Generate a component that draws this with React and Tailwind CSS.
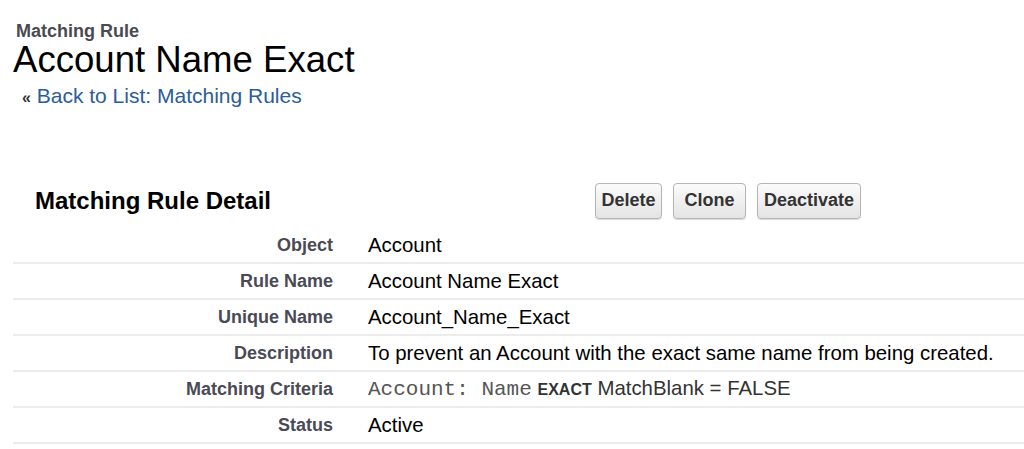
import React from "react";

const rows = [
  { label: "Object", value: "Account" },
  { label: "Rule Name", value: "Account Name Exact" },
  { label: "Unique Name", value: "Account_Name_Exact" },
  {
    label: "Description",
    value: "To prevent an Account with the exact same name from being created.",
  },
  { label: "Matching Criteria", criteria: true },
  { label: "Status", value: "Active" },
];

const buttons = [
  { label: "Delete", w: "w-[67px]" },
  { label: "Clone", w: "w-[73px]" },
  { label: "Deactivate", w: "w-[104px]" },
];

function Criteria() {
  return (
    <span className="text-[#333]">
      <span className="font-['Liberation_Mono',monospace] text-[21px] text-[#555]">
        Account: Name
      </span>{" "}
      <span className="text-[16px] font-semibold">EXACT</span> MatchBlank = FALSE
    </span>
  );
}

export default function App() {
  return (
    <div className="w-[1024px] h-[449px] overflow-hidden bg-white font-['Liberation_Sans',Arial,sans-serif] pl-[13px]">
      {/* page header */}
      <div className="pt-[21px]">
        <div className="pl-[3px] text-[18px] leading-[20px] font-bold text-[#4a4a50]">
          Matching Rule
        </div>
        <h1 className="text-[36.6px] leading-[37px] text-black">Account Name Exact</h1>
        <div className="mt-[7px] pl-[9px] text-[21px] leading-[22px]">
          <span className="text-[#333] text-[16px] font-bold">«</span>{" "}
          <a href="#" className="text-[#2b5d99]">
            Back to List: Matching Rules
          </a>
        </div>
      </div>

      {/* detail block */}
      <div className="mt-[69px]">
        <div className="flex items-center h-[45px]">
          <h2 className="w-[582px] pl-[22px] text-[24px] font-bold text-black">
            Matching Rule Detail
          </h2>
          <div className="flex gap-[11px]">
            {buttons.map((b) => (
              <button
                key={b.label}
                className={`${b.w} h-[36px] rounded-[4px] border border-[#b5b5b5] bg-gradient-to-b from-[#fbfbfb] to-[#e4e4e4] text-[18px] font-bold text-[#333] shadow-[0_1px_1px_rgba(0,0,0,0.15)]`}
              >
                {b.label}
              </button>
            ))}
          </div>
        </div>

        <div className="mt-[5px]">
          {rows.map((r) => (
            <div
              key={r.label}
              className="flex items-center h-[36px] border-b-2 border-[#ececec]"
            >
              <div className="w-[320px] text-right text-[18px] font-bold text-[#4a4a56]">
                {r.label}
              </div>
              <div className="pl-[35px] text-[20.4px] text-black">
                {r.criteria ? <Criteria /> : r.value}
              </div>
            </div>
          ))}
        </div>
      </div>
    </div>
  );
}
